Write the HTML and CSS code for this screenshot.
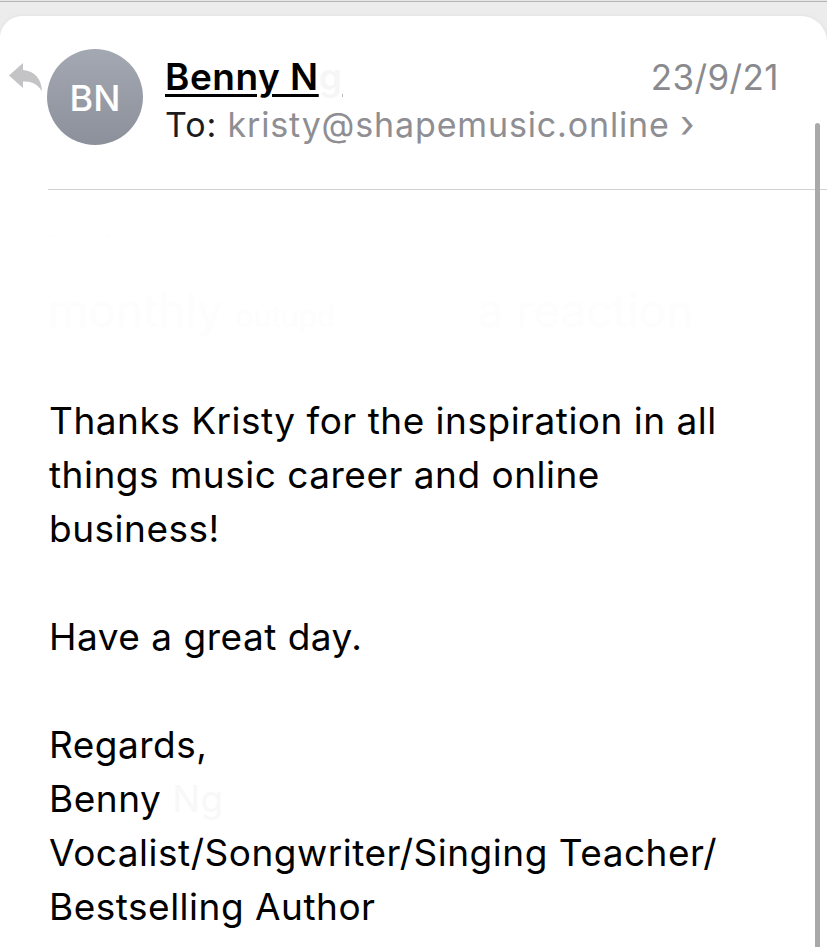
FILE: index.html
```html
<!DOCTYPE html>
<html lang="en">
<head>
<meta charset="utf-8">
<title>Mail</title>
<link rel="stylesheet" href="styles.css">
</head>
<body>
<div class="topline"></div>
<div class="sheet">
  <div class="card">
    <header class="head">
      <svg class="reply" width="34" height="28" viewBox="0 0 34 28" aria-hidden="true">
        <path d="M14 0 L0 12.5 L14 25 L14 18.5 C22 18 28 20.5 33 28 C32.5 16.5 26 8 14 7 Z" fill="#c4c4c6"/>
      </svg>
      <div class="avatar">BN</div>
      <div class="meta">
        <div class="row1">
          <span class="from">Benny N<span class="fade">g</span></span>
          <span class="date">23/9/21</span>
        </div>
        <div class="row2"><span class="to">To:</span> <span class="addr">kristy@shapemusic.online</span> <span class="chev">&#x203A;</span></div>
      </div>
    </header>
    <div class="divider"></div>
    <div class="ghost">
      <p class="ghost1">. &nbsp; &nbsp; &nbsp; &nbsp; . &nbsp; &nbsp; &nbsp; &nbsp; &nbsp; &nbsp; &nbsp; &nbsp; &nbsp; &nbsp; &nbsp; &nbsp; &nbsp; &nbsp; &nbsp; &nbsp; &nbsp; &nbsp; &nbsp; &nbsp; &nbsp; &nbsp; &nbsp; &nbsp; &nbsp; &nbsp; &nbsp; &nbsp; &nbsp; &nbsp; .</p>
      <p class="ghost2">monthly <span class="sm">outupd</span> &nbsp; &nbsp; &nbsp; &nbsp; &nbsp; a reaction</p>
    </div>
    <div class="body">
      <p>Thanks Kristy for the inspiration in all things music career and online business!</p>
      <p>Have a great day.</p>
      <p>Regards,<br>Benny <span class="fade2">Ng</span><br>Vocalist/Songwriter/Singing Teacher/<br>Bestselling Author</p>
    </div>
  </div>
  <div class="scrollbar"></div>
</div>
</body>
</html>
```

FILE: styles.css
```css
* { box-sizing: border-box; }
html, body { margin: 0; padding: 0; }
body {
  width: 827px;
  height: 947px;
  overflow: hidden;
  background: #ececec;
  font-family: Inter, "Noto Sans", "Liberation Sans", sans-serif;
  color: #000;
}
.topline {
  height: 2px;
  background: #b5b5b5;
  border-top: 1px solid #e6e6e6;
}
.sheet {
  position: relative;
  margin-top: 14px;
  height: 931px;
}
.card {
  background: #fff;
  height: 100%;
  border-radius: 22px 26px 0 0;
  box-shadow: 0 0 4px rgba(0,0,0,0.06);
  padding-top: 33px;
}
.head {
  display: flex;
  align-items: flex-start;
  padding-left: 9px;
  padding-right: 48px;
}
.reply {
  margin-top: 14px;
  flex: none;
}
.avatar {
  flex: none;
  width: 96px;
  height: 96px;
  margin-left: 4px;
  border-radius: 50%;
  background: linear-gradient(#a3a8b3, #8b909b);
  color: #fff;
  font-size: 36px;
  font-weight: 500;
  display: flex;
  align-items: center;
  justify-content: center;
  letter-spacing: 0;
  padding-top: 2px;
}
.meta {
  flex: 1;
  margin-left: 22px;
  margin-top: 5px;
}
.row1 {
  display: flex;
  justify-content: space-between;
  align-items: baseline;
  height: 44px;
}
.from {
  font-size: 37px;
  font-weight: 600;
  text-decoration: underline;
  text-decoration-thickness: 3px;
  text-underline-offset: 4px;
  letter-spacing: 0.5px;
}
.fade {
  color: #f6f6f6;
  text-decoration-color: #f4f4f4;
}
.date {
  font-size: 35px;
  color: #8a8a8e;
  letter-spacing: 0.4px;
}
.row2 {
  font-size: 34px;
  line-height: 50px;
  letter-spacing: 0.85px;
}
.to { color: #1c1c1e; }
.addr, .chev { color: #8e8e93; }
.chev { font-size: 38px; }
.divider {
  margin: 39px 0 0 48px;
  height: 1px;
  background: #d1d1d6;
}
.ghost { padding-left: 48px; color: #fdfdfd; }
.ghost p { margin: 0; }
.ghost1 { font-size: 20px; height: 80px; padding-top: 28px; }
.ghost2 { font-size: 46px; height: 124px; padding-top: 12px; }
.ghost2 .sm { font-size: 30px; }
.body {
  padding: 0 58px 0 49px;
  font-size: 37px;
  line-height: 54px;
  letter-spacing: 0.5px;
}
.body p { margin: 0 0 54px; }
.fade2 { color: #f8f8f8; }
.scrollbar {
  position: absolute;
  right: 7px;
  top: 107px;
  width: 5px;
  bottom: 0;
  border-radius: 3px 3px 0 0;
  background: #a9a9a9;
}
```
